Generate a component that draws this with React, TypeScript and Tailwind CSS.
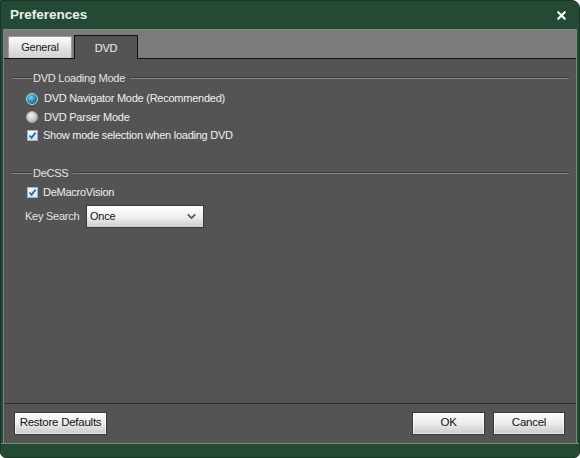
import { ChevronDown, X } from "lucide-react";

function Radio({ checked }: { checked: boolean }) {
  return (
    <span
      className={
        "flex h-[12px] w-[12px] items-center justify-center rounded-full border " +
        (checked
          ? "border-[#c8d4dc] bg-[radial-gradient(circle_at_40%_35%,#7fd0f0,#1d7fb4_55%,#0c5f8e)]"
          : "border-[#a8a8a8] bg-[radial-gradient(circle_at_40%_35%,#f4f4f4,#c4c4c4_60%,#9a9a9a)]")
      }
    />
  );
}

function Check() {
  return (
    <span className="flex h-[11px] w-[11px] items-center justify-center border border-[#9fb3c2] bg-gradient-to-b from-[#f4f8fb] to-[#d7e2ea]">
      <svg width="9" height="9" viewBox="0 0 9 9">
        <path d="M1.5 4.5 L3.5 6.8 L7.6 1.6" fill="none" stroke="#1f6fb0" strokeWidth="1.8" />
      </svg>
    </span>
  );
}

function Group({ title }: { title: string }) {
  return (
    <div className="flex h-[14px] items-center">
      <div className="w-[20px] border-t border-b border-t-[#3a3a3a] border-b-[#858585]" />
      <span className="px-[1px] text-[#e4e4e4]">{title}</span>
      <div className="ml-[4px] flex-1 border-t border-b border-t-[#3a3a3a] border-b-[#858585]" />
    </div>
  );
}

function Button({ label, w }: { label: string; w: string }) {
  return (
    <button
      className={
        w +
        " h-[23px] border border-[#3a3a3a] bg-gradient-to-b from-[#fafafa] via-[#ececec] to-[#c9c9c9] text-[11.5px] text-[#111] shadow-[inset_0_0_0_1px_#ffffff80]"
      }
    >
      {label}
    </button>
  );
}

export default function App() {
  return (
    <div
      className="flex h-[458px] w-[580px] flex-col overflow-hidden rounded-tr-[8px] rounded-b-[6px] border border-[#1c3526] bg-[#244935] text-[11px] tracking-[-0.25px]"
      style={{ fontFamily: '"Liberation Sans", Arial, sans-serif' }}
    >
      <div className="flex h-[28px] shrink-0 items-center justify-between pl-[9px] pr-[11px]">
        <span className="text-[13.5px] font-bold tracking-normal text-[#e9f1ec]">Preferences</span>
        <X size={13} strokeWidth={4} className="text-white" />
      </div>

      <div className="mx-[2px] flex flex-1 flex-col border-x border-[#6f8f7b] bg-[#545454]">
        <div className="flex h-[29px] shrink-0 items-end gap-[2px] border-t border-[#6f8f7b] bg-[#7b7b7b] pl-[4px]">
          <div className="flex h-[22px] w-[64px] items-center justify-center border border-b-0 border-[#9a9a9a] bg-gradient-to-b from-[#fbfbfb] to-[#cfcfcf] text-[#1a1a1a]">
            General
          </div>
          <div className="relative -mb-px flex h-[24px] w-[64px] items-center justify-center border border-b-0 border-[#111] bg-[#545454] pt-[1px] text-[#f0f0f0]">
            DVD
          </div>
        </div>

        <div className="flex flex-1 flex-col border-t border-[#111] pl-[8px] pr-[7px] pt-[12px]">
          <Group title="DVD Loading Mode" />
          <div className="mt-[4px] flex flex-col pl-[14px]">
            <label className="flex h-[19px] items-center gap-[6px] text-[#f0f0f0]">
              <Radio checked />
              DVD Navigator Mode (Recommended)
            </label>
            <label className="flex h-[18px] items-center gap-[6px] text-[#f0f0f0]">
              <Radio checked={false} />
              DVD Parser Mode
            </label>
            <label className="flex h-[18px] items-center gap-[5px] pl-[1px] text-[#f0f0f0]">
              <Check />
              Show mode selection when loading DVD
            </label>
          </div>

          <div className="mt-[22px]">
            <Group title="DeCSS" />
          </div>
          <label className="mt-[3px] flex h-[18px] items-center gap-[5px] pl-[15px] text-[#f0f0f0]">
            <Check />
            DeMacroVision
          </label>
          <div className="mt-[4px] flex items-center pl-[13px]">
            <span className="w-[61px] text-[#e4e4e4]">Key Search</span>
            <div className="flex h-[23px] w-[118px] items-center justify-between border border-[#3a3a3a] bg-gradient-to-b from-[#ffffff] via-[#f0f0f0] to-[#cdcdcd] pl-[3px] pr-[5px] text-[#111]">
              Once
              <ChevronDown size={13} strokeWidth={3.5} className="text-[#3d6b57]" />
            </div>
          </div>
        </div>

        <div className="flex h-[40px] shrink-0 items-center justify-between border-t border-[#2e2e2e] pl-[10px] pr-[11px] pb-[1px]">
          <Button label="Restore Defaults" w="w-[93px]" />
          <div className="flex gap-[8px]">
            <Button label="OK" w="w-[73px]" />
            <Button label="Cancel" w="w-[72px]" />
          </div>
        </div>
      </div>

      <div className="h-[14px] shrink-0 border-t border-[#6f8f7b]" />
    </div>
  );
}
